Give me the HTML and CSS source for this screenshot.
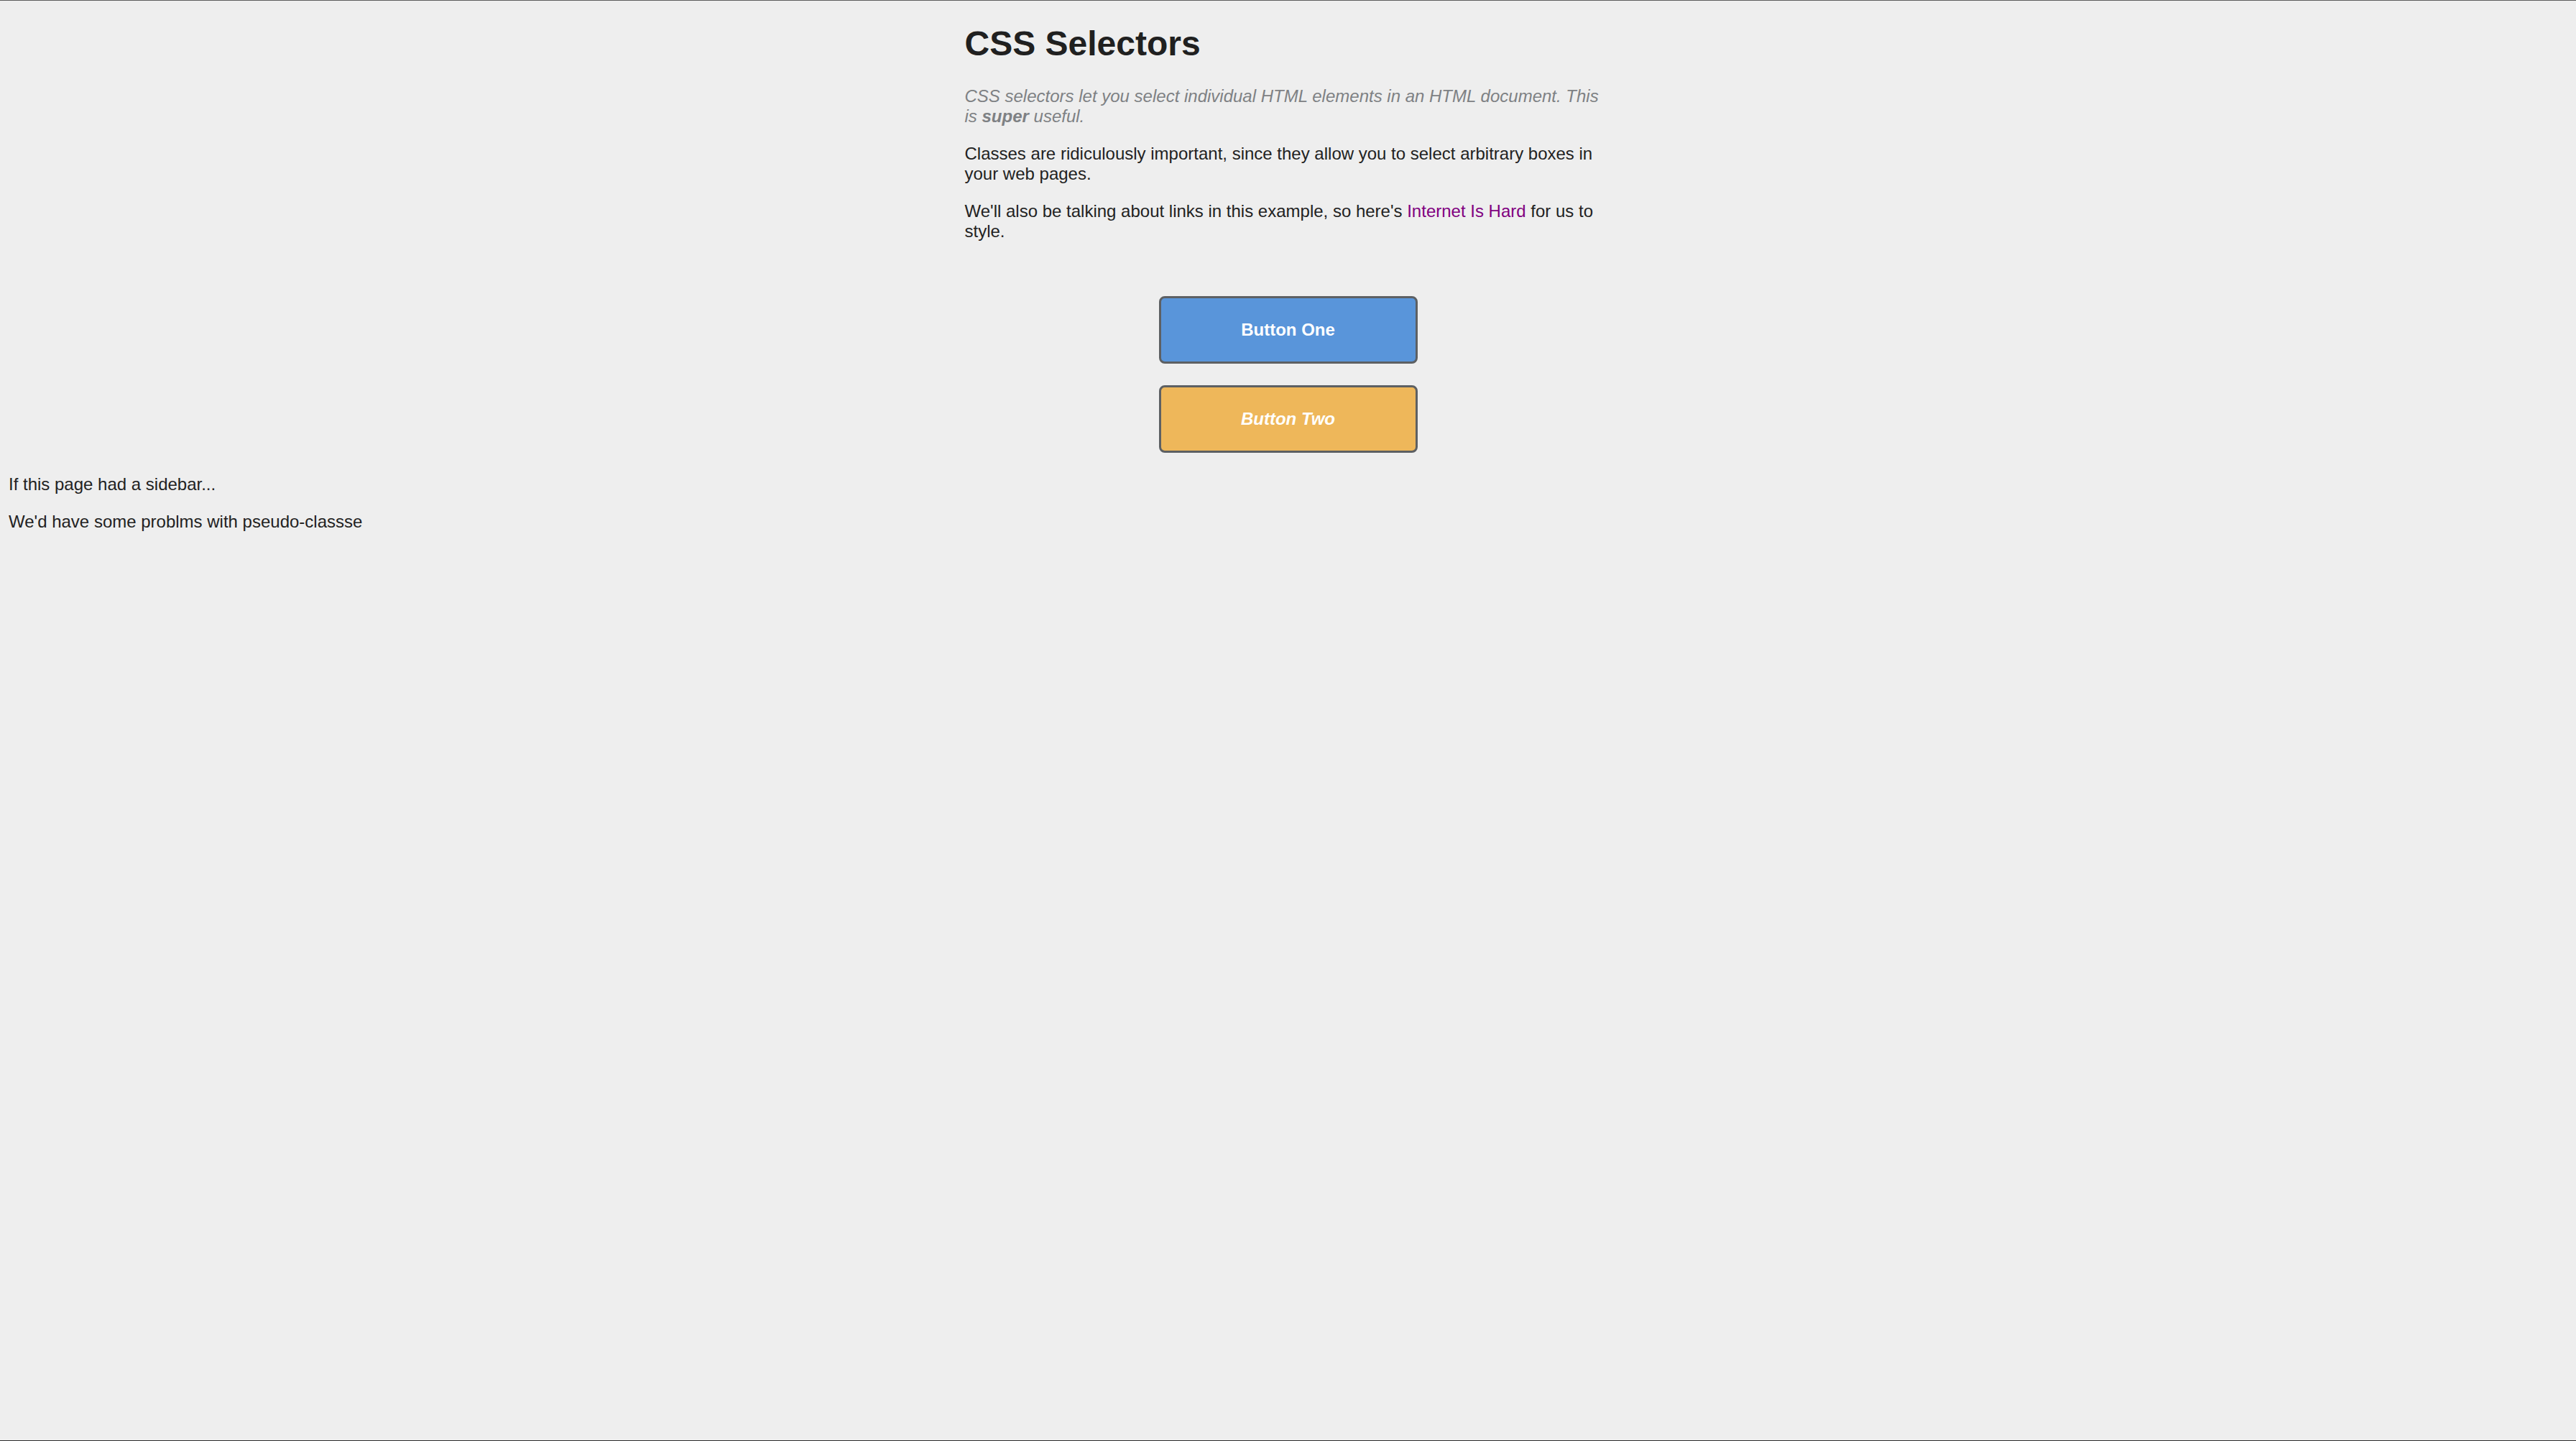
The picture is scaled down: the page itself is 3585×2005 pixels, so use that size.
FILE: index.html
```html
<!DOCTYPE html>
<html lang="en">
<head>
<meta charset="utf-8">
<title>CSS Selectors</title>
<link rel="stylesheet" href="styles.css">
</head>
<body>
  <div class="page">
    <h1 class="title">CSS Selectors</h1>
    <p class="synopsis">CSS selectors let you select individual HTML elements in an HTML document. This is <strong>super</strong> useful.</p>
    <p class="text">Classes are ridiculously important, since they allow you to select arbitrary boxes in your web pages.</p>
    <p class="text">We'll also be talking about links in this example, so here's <a class="link" href="#">Internet Is Hard</a> for us to style.</p>
    <div class="actions">
      <div class="button">Button One</div>
      <div class="button call-to-action">Button Two</div>
    </div>
  </div>
  <div class="sidebar">
    <p class="text">If this page had a sidebar...</p>
    <p class="text">We'd have some problms with pseudo-classse</p>
  </div>
</body>
</html>
```

FILE: styles.css
```css
html {
  background: #eeeeee;
  border-top: 1px solid #5c5c5c;
  border-bottom: 1px solid #2b2b2b;
  min-height: 100vh;
  box-sizing: border-box;
}

body {
  margin: 0 12px;
  font-family: "Liberation Sans", Arial, sans-serif;
  font-size: 24px;
  color: #222222;
}

.page {
  width: 900px;
  margin: 0 auto;
}

.title {
  font-size: 48px;
  font-weight: bold;
  color: #202020;
  margin: 32px 0;
}

.synopsis {
  color: #7e8184;
  font-style: italic;
  margin: 24px 0;
}

.text {
  margin: 24px 0;
}

.link {
  color: #800080;
  text-decoration: none;
}

.actions {
  display: flex;
  flex-direction: column;
  align-items: center;
  gap: 30px;
  margin: 76px 0 30px;
}

.button {
  box-sizing: border-box;
  width: 360px;
  padding: 30px;
  color: #ffffff;
  background: #5995da;
  font-weight: bold;
  text-align: center;
  border: 3px solid #5d6063;
  border-radius: 8px;
}

.call-to-action {
  font-style: italic;
  background: #eeb75a;
}

.sidebar {
  margin-top: 30px;
}
```
